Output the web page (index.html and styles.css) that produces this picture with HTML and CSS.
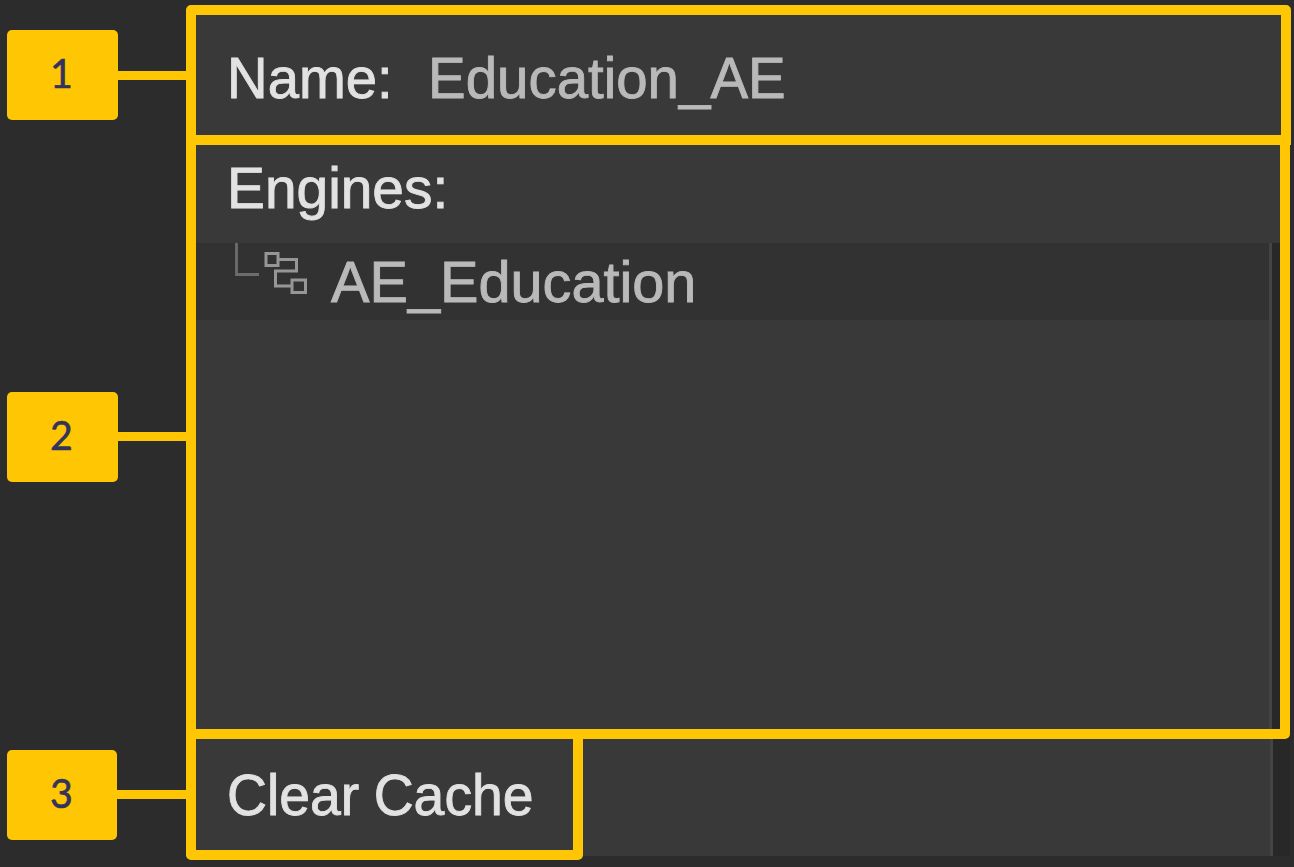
FILE: index.html
```html
<!DOCTYPE html>
<html lang="en">
<head>
<meta charset="utf-8">
<title>Education_AE</title>
<link rel="stylesheet" href="styles.css">
</head>
<body>
<main class="guide">
  <section class="row row-name">
    <div class="callout"><span class="digit">1</span></div>
    <div class="connector"></div>
    <div class="frame frame-name">
      <span class="text label name-label">Name:</span>
      <span class="text value name-value">Education_AE</span>
    </div>
  </section>
  <section class="row row-engines">
    <div class="callout"><span class="digit">2</span></div>
    <div class="connector"></div>
    <div class="frame frame-engines">
      <div class="engines-head"><span class="text label engines-label">Engines:</span></div>
      <div class="tree">
        <div class="tree-body">
          <div class="tree-item">
            <svg class="tree-icon" width="76" height="56" viewBox="0 0 76 56" fill="none">
              <path d="M4.500 0V31.500H27" stroke="#6c6c6c" stroke-width="2.800"/>
              <path d="M34 10.500H46V22.500H34ZM46 16.500H64.500V28H43.500V43H60M60 37H73.500V49.500H60Z" stroke="#969696" stroke-width="3"/>
            </svg>
            <span class="text value tree-name">AE_Education</span>
          </div>
        </div>
        <div class="divider"></div>
        <div class="track"></div>
      </div>
    </div>
  </section>
  <section class="row row-cache">
    <div class="callout callout-cache"><span class="digit">3</span></div>
    <div class="connector connector-cache"></div>
    <div class="frame frame-cache"><span class="text label cache-label">Clear Cache</span></div>
    <div class="panel-foot">
      <div class="foot-body"></div>
      <div class="divider"></div>
      <div class="track"></div>
    </div>
  </section>
</main>
</body>
</html>
```
FILE: styles.css
```css
* { box-sizing: border-box; }
body { margin: 0; background: #2c2c2c; }
.guide {
  width: 1294px;
  height: 867px;
  overflow: hidden;
  display: flex;
  flex-direction: column;
  padding: 5px 0 0 6.500px;
}
.row { display: flex; align-items: flex-start; flex: none; }
.row-name { height: 140px; }
.row-engines { height: 604px; margin-top: -10px; }
.row-cache { height: 131px; margin-top: -10px; }
.callout {
  flex: none;
  width: 111px;
  height: 90px;
  display: flex;
  align-items: center;
  justify-content: center;
  background: #ffc604;
  border-radius: 5px;
}
.row-name .callout { margin-top: 25.400px; }
.row-engines .callout { margin-top: 256.500px; }
.callout-cache { width: 110px; margin-top: 20.500px; }
.digit {
  font: 41px/48px Lato, sans-serif;
  color: #33345a;
  -webkit-text-stroke: .6px #33345a;
  transform: translate(-.5px, -2px) scaleX(.96);
}
.connector { flex: none; width: 68.500px; height: 9px; background: #ffc604; }
.row-name .connector { margin-top: 66px; }
.row-engines .connector { margin-top: 297px; }
.connector-cache { width: 69.500px; margin-top: 61px; }
.frame {
  flex: none;
  border: 10px solid #ffc604;
  background: #393939;
}
.frame-name {
  display: flex;
  align-items: flex-start;
  width: 1104.500px;
  height: 140px;
  border-radius: 5px 5px 0 0;
  padding: 30px 0 0 31px;
}
.frame-engines {
  display: flex;
  flex-direction: column;
  width: 1104.500px;
  height: 604px;
  margin-left: -.5px;
  border-radius: 0 0 5px 5px;
}
.frame-cache {
  width: 397.500px;
  height: 131px;
  margin-left: -.5px;
  border-radius: 0 0 5px 5px;
  padding: 23px 0 0 31px;
}
.text {
  display: block;
  font: 58px/66px "Liberation Sans", Arial, sans-serif;
  -webkit-text-stroke: .9px currentColor;
  white-space: pre;
  transform-origin: left;
}
.label { color: #e2e2e2; }
.value { color: #b9b9b9; }
.name-label { width: 201px; transform: scaleX(.97); }
.name-value { transform: scaleX(.973); }
.engines-label { transform: scaleX(.98); }
.cache-label { word-spacing: -1px; transform: scaleX(.954); }
.engines-head { height: 98px; padding: 10px 0 0 31px; }
.tree { display: flex; flex: 1; }
.tree-body { flex: 1; }
.tree-item {
  display: flex;
  align-items: flex-start;
  height: 77px;
  background: #323232;
  padding-left: 36px;
}
.tree-icon { flex: none; }
.tree-name { margin: 6px 0 0 23px; transform: scaleX(.994); }
.divider { width: 3px; background: #444; }
.track { width: 8px; background: #282828; }
.panel-foot { display: flex; height: 117px; margin-top: 10px; width: 707px; }
.foot-body { flex: 1; background: #393939; }
.panel-foot .track { width: 17px; }
```
